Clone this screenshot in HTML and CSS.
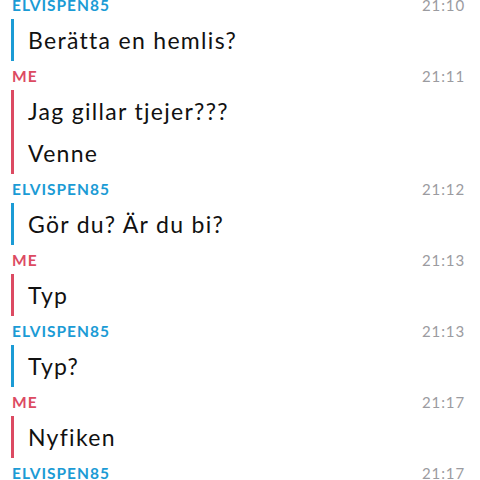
FILE: index.html
```html
<!DOCTYPE html>
<html>
<head>
<meta charset="utf-8">
<link rel="stylesheet" href="styles.css">
</head>
<body>
<div class="chat">
  <div class="group them">
    <div class="head"><span class="name">ELVISPEN85</span><span class="time">21:10</span></div>
    <div class="msgs"><div class="msg">Berätta en hemlis?</div></div>
  </div>
  <div class="group me">
    <div class="head"><span class="name">ME</span><span class="time">21:11</span></div>
    <div class="msgs"><div class="msg">Jag gillar tjejer???</div><div class="msg">Venne</div></div>
  </div>
  <div class="group them">
    <div class="head"><span class="name">ELVISPEN85</span><span class="time">21:12</span></div>
    <div class="msgs"><div class="msg">Gör du? Är du bi?</div></div>
  </div>
  <div class="group me">
    <div class="head"><span class="name">ME</span><span class="time">21:13</span></div>
    <div class="msgs"><div class="msg">Typ</div></div>
  </div>
  <div class="group them">
    <div class="head"><span class="name">ELVISPEN85</span><span class="time">21:13</span></div>
    <div class="msgs"><div class="msg">Typ?</div></div>
  </div>
  <div class="group me">
    <div class="head"><span class="name">ME</span><span class="time">21:17</span></div>
    <div class="msgs"><div class="msg">Nyfiken</div></div>
  </div>
  <div class="group them">
    <div class="head"><span class="name">ELVISPEN85</span><span class="time">21:17</span></div>
  </div>
</div>
</body>
</html>
```
FILE: styles.css
```css
html, body {
  margin: 0;
  padding: 0;
  background: #ffffff;
  overflow: hidden;
}
body {
  font-family: "Lato", "Open Sans", sans-serif;
}
.chat {
  margin-top: -5px;
  display: flex;
  flex-direction: column;
}
.group {
  display: flex;
  flex-direction: column;
  padding-bottom: 5px;
}
.head {
  display: flex;
  justify-content: space-between;
  align-items: baseline;
  height: 20px;
  line-height: 20px;
  margin-bottom: 4px;
  padding: 0 15px 0 12px;
}
.name {
  font-size: 15.5px;
  font-weight: 700;
  letter-spacing: 1px;
}
.time {
  font-size: 15px;
  color: #9b9ba0;
  letter-spacing: 0.9px;
}
.msgs {
  margin-left: 11px;
  border-left: 3px solid;
  padding-left: 14px;
}
.msg {
  font-size: 23px;
  line-height: 42px;
  color: #111111;
  height: 42px;
  letter-spacing: 1.3px;
}
.them .name { color: #1b9bd5; }
.them .msgs { border-color: #1b9bd5; }
.me .name { color: #dc4a62; }
.me .msgs { border-color: #dc4a62; }
```
